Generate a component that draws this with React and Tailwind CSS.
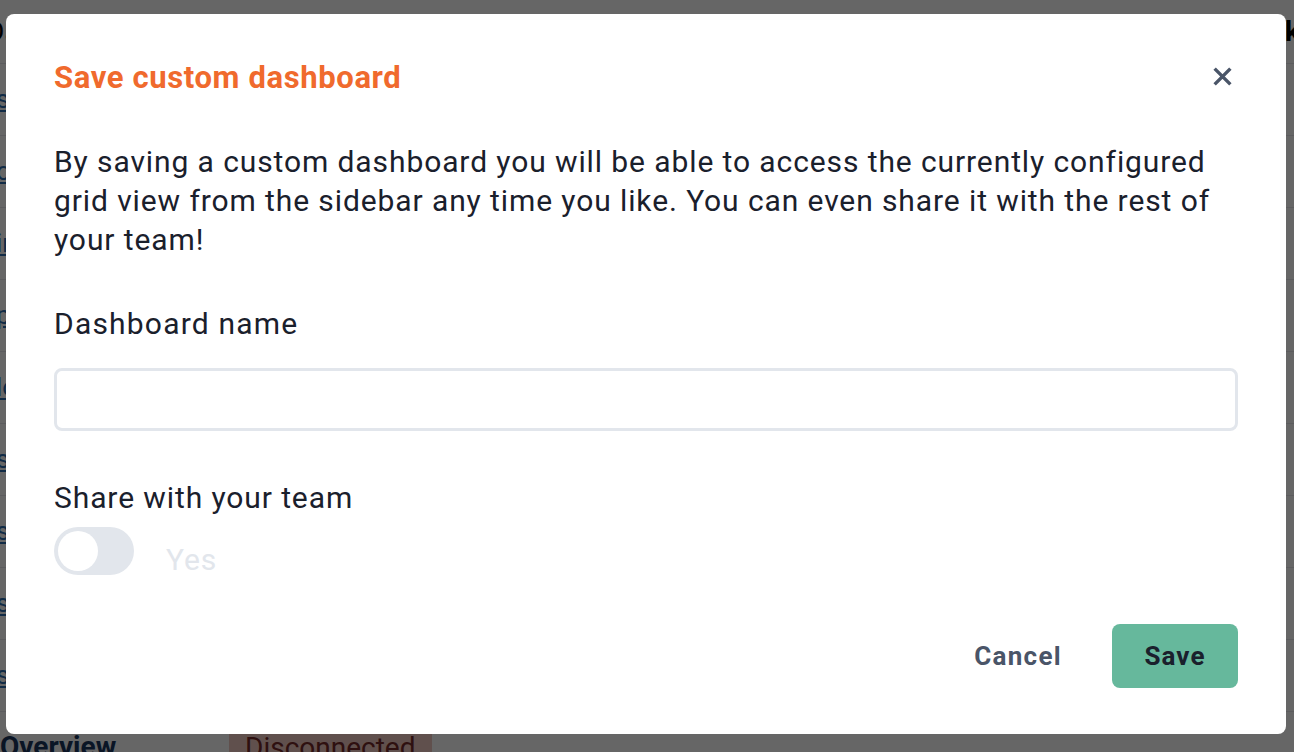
import React, { useState } from 'react';

const rows = ['sales', 'ops', 'infra', 'pod', 'logs', 'sso', 'sync', 'site', 'stats'];

const BackgroundPage = () => (
  <div className="h-[752px] overflow-hidden bg-white">
    <div className="flex h-[64px] items-center justify-between border-b border-gray-200">
      <span className="-ml-[14px] text-[28px] text-black">Data</span>
      <span className="-mr-[6px] text-[28px] font-bold text-black">Check</span>
    </div>
    {rows.map((r) => (
      <div key={r} className="flex h-[72px] items-center border-b border-gray-200">
        <a className="-ml-[4px] text-[26px] text-[#2b6cb0] underline">{r}</a>
      </div>
    ))}
    <div className="flex h-[60px] items-start">
      <span className="mt-[14px] w-[229px] text-[28px] font-bold text-[#1a365d]">Overview</span>
      <span className="mt-[7px] rounded-md bg-[#f0c9c0] px-4 pt-2 text-[28px] text-[#742a2a]">Disconnected</span>
    </div>
  </div>
);

const App = () => {
  const [name, setName] = useState('');
  const [shared, setShared] = useState(false);

  return (
    <div className="relative h-[752px] w-full overflow-hidden font-['Roboto',sans-serif]">
      <BackgroundPage />

      {/* overlay + modal */}
      <div className="absolute inset-0 bg-black/60 pl-[6px] pt-[14px]">
        <div className="flex h-[720px] w-[1280px] flex-col rounded-lg bg-white px-12 pt-[44px]">
          <div className="flex items-center justify-between">
            <h2 className="text-[31px] font-bold leading-[40px] tracking-[0.02em] text-[#f06a2d]">
              Save custom dashboard
            </h2>
            <button className="-mt-[4px] mr-[6px] text-[#4a5568]">
              <svg width="19" height="19" viewBox="0 0 20 20" fill="none">
                <path d="M3 3L17 17M17 3L3 17" stroke="currentColor" strokeWidth="3.6" strokeLinecap="square" />
              </svg>
            </button>
          </div>

          <p className="mt-[44px] text-[30px] leading-[39px] tracking-[0.03em] text-[#1a202c]">
            By saving a custom dashboard you will be able to access the currently configured grid view from the
            sidebar any time you like. You can even share it with the rest of your team!
          </p>

          <label className="mt-[45px] text-[30px] leading-[40px] tracking-[0.04em] text-[#1a202c]">
            Dashboard name
          </label>
          <input
            value={name}
            onChange={(e) => setName(e.target.value)}
            className="mt-[24px] h-[63px] w-full rounded-lg border-[3px] border-[#e2e6ec] px-4 text-[26px] outline-none"
          />

          <div className="mt-[47px] text-[30px] leading-[40px] tracking-[0.03em] text-[#1a202c]">
            Share with your team
          </div>
          <div className="mt-[1px] flex items-center gap-[32px]">
            <button
              onClick={() => setShared(!shared)}
              className="flex h-[48px] w-[80px] items-center rounded-full bg-[#e2e6ec] p-[4px]"
            >
              <span className="h-[40px] w-[40px] rounded-full bg-white" />
            </button>
            <span className="mt-[18px] text-[30px] tracking-[0.03em] text-[#e2e6ec]">Yes</span>
          </div>

          <div className="mt-[42px] flex items-center justify-end gap-[50px]">
            <button className="text-[26px] font-bold tracking-[0.05em] text-[#4a5568]">Cancel</button>
            <button className="h-[64px] w-[126px] rounded-lg bg-[#66b89c] text-[26px] font-bold tracking-[0.04em] text-[#1a202c]">
              Save
            </button>
          </div>
        </div>
      </div>
    </div>
  );
};

export default App;
